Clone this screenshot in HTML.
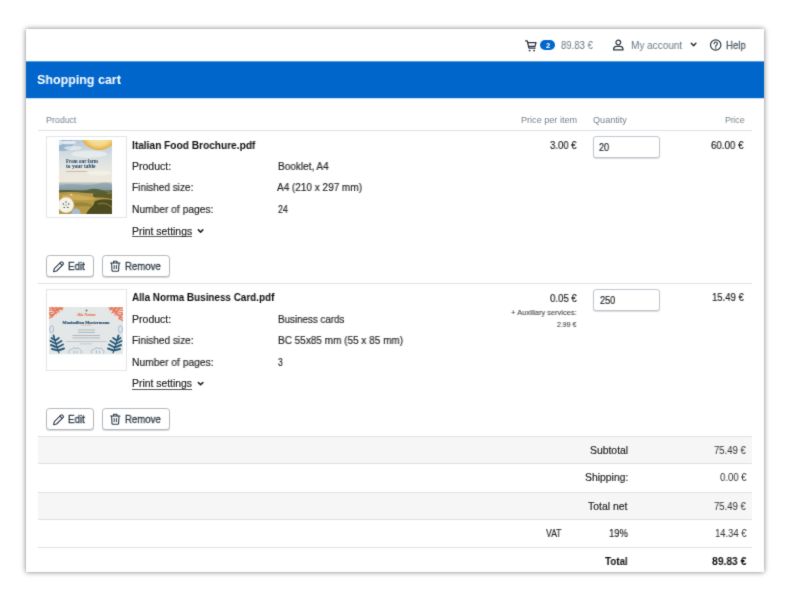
<!DOCTYPE html>
<html>
<head>
<meta charset="utf-8">
<title>Shopping cart</title>
<style>
*{box-sizing:border-box;margin:0;padding:0}
html,body{width:800px;height:600px;overflow:hidden;background:#fff}
body{font-family:"Liberation Sans",sans-serif;position:relative;filter:url(#soft)}
body>*{position:absolute}
.card{left:26px;top:28.6px;width:738px;height:543.4px;background:#fff;box-shadow:.3px .3px 4.5px rgba(0,0,0,.44),0 0 8px rgba(0,0,0,.12)}
.t{white-space:nowrap;transform-origin:0 50%;display:block;will-change:transform}
.bar{left:26px;top:61px;width:738px;height:37px;background:#0066cc;box-shadow:0 1px 0 rgba(0,102,204,.3)}
.ln{height:1px;background:#e0e1e3;left:38px;width:714px}
.grey{background:#f6f6f6;left:38px;width:714px}
.thumb{border:1px solid #e3e5e8;background:#fff;left:46px;width:81px;height:82px}
.btn{border:1px solid #b3b9be;border-radius:3.5px;height:22px;background:#fff;box-shadow:0 1px 1px rgba(60,70,80,.22)}
.inp{border:1px solid #c0c7ce;border-radius:3px;left:593px;width:67px;height:22px;background:#fff;box-shadow:0 1px 1px rgba(60,70,80,.2)}
.badge{left:540px;top:40px;width:15px;height:10px;border-radius:5px;background:#0066cc}
.ul{height:1px;background:#302e30;opacity:.8}
svg{overflow:visible}
</style>
</head>
<body>
<svg width="0" height="0" style="left:0;top:0"><defs><filter id="soft" x="0" y="0" width="100%" height="100%" color-interpolation-filters="sRGB"><feConvolveMatrix order="3" kernelMatrix="0.02 0.08 0.02 0.08 0.6 0.08 0.02 0.08 0.02" divisor="1" edgeMode="duplicate" preserveAlpha="false"/></filter></defs></svg>
<div class="card"></div>
<svg style="left:26px;top:61px" width="738" height="38" viewBox="0 0 738 38"><rect x="0" y="0.35" width="738" height="36.85" fill="#0066cc"/></svg>
<div class="badge"></div>

<!-- separators -->
<div class="ln" style="top:130px"></div>
<div class="ln" style="top:283px"></div>
<div class="grey" style="top:437px;height:26px"></div>
<div class="grey" style="top:493px;height:26px"></div>
<div class="ln" style="top:436px"></div>
<div class="ln" style="top:463px"></div>
<div class="ln" style="top:492px"></div>
<div class="ln" style="top:519px"></div>
<div class="ln" style="top:547px"></div>

<!-- thumbs -->
<div class="thumb" style="top:136px"></div>
<div class="thumb" style="top:289px"></div>

<!-- inputs & buttons -->
<div class="inp" style="top:136px"></div>
<div class="inp" style="top:289px"></div>
<div class="btn" style="left:46px;top:255px;width:48px"></div>
<div class="btn" style="left:102px;top:255px;width:68px"></div>
<div class="btn" style="left:46px;top:408px;width:48px"></div>
<div class="btn" style="left:102px;top:408px;width:68px"></div>

<!-- underlines -->
<div class="ul" style="left:132px;top:236px;width:60px"></div>
<div class="ul" style="left:132px;top:389px;width:60px"></div>

<!--ICONS-->
<!-- nav icons -->
<svg style="left:525px;top:39.5px" width="12" height="12" viewBox="0 0 12 12" fill="none" stroke="#2a333c" stroke-width="1.25" stroke-linecap="round" stroke-linejoin="round">
  <path d="M0.6 0.9H2.3L3.9 8.1H10.2"/>
  <path d="M2.8 2.6H11L10 6.3H3.6"/>
  <circle cx="4.6" cy="10.6" r="0.95" fill="#2f3943" stroke="none"/>
  <circle cx="9.1" cy="10.6" r="0.95" fill="#2f3943" stroke="none"/>
</svg>
<svg style="left:612px;top:39px" width="13" height="12" viewBox="0 0 13 12" fill="none" stroke="#2f3943" stroke-width="1.25" stroke-linejoin="round">
  <circle cx="6.3" cy="3.5" r="2.35"/>
  <path d="M1.6 10.9V10.2A3 3 0 0 1 4.6 7.4H8A3 3 0 0 1 11 10.2V10.9Z"/>
</svg>
<svg style="left:690px;top:42px" width="7" height="5" viewBox="0 0 7 5" fill="none" stroke="#27313b" stroke-width="1.5" stroke-linecap="round" stroke-linejoin="round">
  <path d="M1.3 1.3L3.6 3.7L5.9 1.3"/>
</svg>
<svg style="left:709px;top:39px" width="13" height="13" viewBox="0 0 13 13" fill="none" stroke="#2f3943" stroke-width="1.2" stroke-linecap="round">
  <circle cx="6.7" cy="6" r="5.2"/>
  <path d="M5.1 4.7A1.65 1.65 0 1 1 7.4 6.2C6.9 6.5 6.7 6.8 6.7 7.4" stroke-width="1.15"/>
  <circle cx="6.7" cy="9" r="0.7" fill="#2f3943" stroke="none"/>
</svg>
<!-- print settings chevrons -->
<svg style="left:197px;top:228.2px" width="7" height="5" viewBox="0 0 7 5" fill="none" stroke="#20262c" stroke-width="1.6" stroke-linecap="round" stroke-linejoin="round">
  <path d="M1.4 1.9L3.6 4.1L5.8 1.9"/>
</svg>
<svg style="left:197px;top:381.2px" width="7" height="5" viewBox="0 0 7 5" fill="none" stroke="#20262c" stroke-width="1.6" stroke-linecap="round" stroke-linejoin="round">
  <path d="M1.4 1.6L3.6 3.8L5.8 1.6"/>
</svg>
<!-- pencil + trash (row 1) -->
<svg style="left:53px;top:261px" width="11" height="11" viewBox="0 0 11 11" fill="none" stroke="#2d3b48" stroke-width="1.1" stroke-linejoin="round" stroke-linecap="round">
  <path d="M0.6 10.7L1.3 7.7L7.9 1.1Q8.6 0.5 9.3 1.1L10.2 2Q10.8 2.7 10.2 3.4L3.6 10Z"/>
  <path d="M6.9 2.2L9.1 4.4"/>
</svg>
<svg style="left:110px;top:260.3px" width="11" height="12" viewBox="0 0 11 12" fill="none" stroke="#2d3b48" stroke-width="1.1" stroke-linejoin="round" stroke-linecap="round">
  <path d="M0.6 3H10"/>
  <path d="M3.6 2.9V1.2H7V2.9"/>
  <path d="M1.6 3.2L2 10.4Q2.05 11.3 3 11.3H7.6Q8.55 11.3 8.6 10.4L9 3.2"/>
  <path d="M4.2 5.5V8.7M6.4 5.5V8.7" stroke-width="1"/>
</svg>
<!-- pencil + trash (row 2) -->
<svg style="left:53px;top:414px" width="11" height="11" viewBox="0 0 11 11" fill="none" stroke="#2d3b48" stroke-width="1.1" stroke-linejoin="round" stroke-linecap="round">
  <path d="M0.6 10.7L1.3 7.7L7.9 1.1Q8.6 0.5 9.3 1.1L10.2 2Q10.8 2.7 10.2 3.4L3.6 10Z"/>
  <path d="M6.9 2.2L9.1 4.4"/>
</svg>
<svg style="left:110px;top:413.3px" width="11" height="12" viewBox="0 0 11 12" fill="none" stroke="#2d3b48" stroke-width="1.1" stroke-linejoin="round" stroke-linecap="round">
  <path d="M0.6 3H10"/>
  <path d="M3.6 2.9V1.2H7V2.9"/>
  <path d="M1.6 3.2L2 10.4Q2.05 11.3 3 11.3H7.6Q8.55 11.3 8.6 10.4L9 3.2"/>
  <path d="M4.2 5.5V8.7M6.4 5.5V8.7" stroke-width="1"/>
</svg>
<!-- thumbnail 1: brochure cover -->
<svg style="left:59px;top:140px;will-change:transform" width="53" height="74" viewBox="0 0 53 74">
  <defs>
    <linearGradient id="sky" x1="0" y1="0" x2="0" y2="1">
      <stop offset="0" stop-color="#b4c8d7"/><stop offset=".2" stop-color="#d3dde2"/>
      <stop offset=".4" stop-color="#e8e8e1"/><stop offset=".565" stop-color="#ede8da"/>
      <stop offset=".58" stop-color="#bcc8cc"/><stop offset=".655" stop-color="#8095a0"/>
      <stop offset=".68" stop-color="#6a7a62"/><stop offset=".72" stop-color="#a89046"/>
      <stop offset="1" stop-color="#b0903f"/>
    </linearGradient>
    <radialGradient id="lem" cx=".5" cy=".5" r=".5">
      <stop offset="0" stop-color="#f8ecc0"/><stop offset=".7" stop-color="#f2d88c"/><stop offset=".93" stop-color="#e9b950"/><stop offset="1" stop-color="#e3a63a"/>
    </radialGradient>
    <clipPath id="c1"><rect width="53" height="74"/></clipPath>
  </defs>
  <g clip-path="url(#c1)">
    <rect width="53" height="74" fill="url(#sky)"/>
    <ellipse cx="4" cy="4" rx="10" ry="7" fill="#8eadc9" opacity=".8"/>
    <ellipse cx="9" cy="2.5" rx="8" ry="1.8" fill="#eef2f4" opacity=".85"/>
    <ellipse cx="14" cy="8" rx="9" ry="2" fill="#e9eef1" opacity=".7"/>
    <ellipse cx="30" cy="14" rx="18" ry="3.5" fill="#f1f2ef" opacity=".65"/>
    <ellipse cx="40" cy="33" rx="12" ry="2.5" fill="#f6f3e8" opacity=".7"/>
    <ellipse cx="40" cy="-6" rx="18" ry="16" fill="url(#lem)"/>
    <rect x="0" y="0" width="2.5" height="5" fill="#eef2f4" opacity=".75"/>
    <text x="7" y="23.2" font-family="Liberation Serif" font-weight="bold" font-size="5.1" fill="#21405e" textLength="32" lengthAdjust="spacingAndGlyphs">From our farm</text>
    <text x="7" y="28" font-family="Liberation Serif" font-weight="bold" font-size="5.1" fill="#21405e" textLength="29.5" lengthAdjust="spacingAndGlyphs">to your table</text>
    <rect x="7" y="31" width="21" height=".7" fill="#e09a84"/>
    <path d="M0 45.5Q10 43 20 44.5T40 43.5T53 44.5V50H0Z" fill="#8fa3ad" opacity=".75"/>
    <path d="M0 50.5Q8 49.5 16 50.5T30 49.5T44 50.5T53 49.5V53.5H0Z" fill="#56603a"/>
    <path d="M0 52.5Q14 51.5 26 53T53 52.5V74H0Z" fill="#b69947"/>
    <path d="M3 55.5Q14 53.5 26 56T38 58.5Q30 61 18 60T3 58Z" fill="#d0b059" opacity=".85"/>
    <path d="M34 53.5Q40 52 46 53T53 52.5V59Q46 57 40 57.5T34 55.5Z" fill="#5c5c2c"/>
    <path d="M36 61Q43 58 53 60V74H27Q29 70 32 67.5T36 61Z" fill="#4c4c22"/>
    <path d="M39 64Q45 62 50 65T53 71" stroke="#8d7a34" stroke-width="1.4" fill="none" opacity=".8"/>
    <path d="M15 63Q21 61.5 28 63T32 66.5Q24 65.5 16 66.5Z" fill="#93823a" opacity=".85"/>
    <rect x="11.5" y="54" width="1.8" height="1.2" fill="#f2efe6"/>
    <circle cx="7" cy="65" r="7.8" fill="#f4f2e9"/>
    <g fill="#3b3a2c"><circle cx="7" cy="62" r=".7"/><circle cx="4.3" cy="64" r=".7"/><circle cx="9.7" cy="64" r=".7"/><circle cx="5.2" cy="67.4" r=".7"/><circle cx="8.8" cy="67.4" r=".7"/><circle cx="7" cy="65" r=".6"/></g>
    <circle cx="17" cy="73" r="4.6" fill="#a9bccb"/>
  </g>
</svg>
<!-- thumbnail 2: business card -->
<svg style="left:49px;top:306.5px;will-change:transform" width="74" height="47.5" viewBox="0 0 74 47.5">
  <defs><clipPath id="c2"><rect width="74" height="47.5"/></clipPath></defs>
  <g clip-path="url(#c2)">
    <rect width="74" height="47.5" fill="#e4e7e7"/>
    <!-- coral corners -->
    <g fill="none" stroke="#e9704f" stroke-width="1.25" stroke-linecap="round">
      <path d="M0 1L14 1M0 3.5L11 2.5M1 6L9 3.5M1 8.5L8 5.5M0.5 11L5 8M3 0L7 7M7 0L10 5M11 0L13 3M0 5.5L3 10"/>
      <path d="M74 1L60 1M74 3.5L62 2.5M73 6L64 3.5M73 8.5L65 5.5M73.5 11L68 8M73.5 13.5L70 11M71 0L66 8M67 0L63 6M63 0L61 3M74 5.5L70 12"/>
    </g>
    <!-- logo -->
    <circle cx="37.5" cy="3.6" r="1" fill="#2f8f4e"/>
    <text x="27.5" y="9" font-family="Liberation Serif" font-weight="bold" font-style="italic" font-size="4.2" fill="#e0582f" textLength="19" lengthAdjust="spacingAndGlyphs">Alla Norma</text>
    <text x="13.5" y="16.6" font-family="Liberation Serif" font-weight="bold" font-size="4.8" fill="#234e6c" stroke="#234e6c" stroke-width=".15" textLength="47" lengthAdjust="spacingAndGlyphs">Maximilian Mustermann</text>
    <rect x="32" y="17.9" width="10.5" height=".6" fill="#e9a27a"/>
    <g fill="#66747f" opacity=".6">
      <rect x="29" y="22.6" width="17" height=".7"/><rect x="29" y="24.9" width="17" height=".7"/>
      <rect x="23.5" y="28.3" width="27.5" height=".7"/><rect x="23.5" y="30.6" width="27.5" height=".7"/>
      <rect x="17" y="34.1" width="40.5" height=".6" opacity=".8"/><rect x="31" y="36.6" width="12" height=".6" opacity=".8"/>
    </g>
    <!-- side ornaments -->
    <g fill="none" stroke="#9db6cd" stroke-width=".9">
      <rect x="0.8" y="19" width="3.6" height="6.5" rx="1.6"/><rect x="69.6" y="19" width="3.6" height="6.5" rx="1.6"/>
      <path d="M20 46.5Q19 42.5 22.5 42.5Q24 39.5 27 41.5Q30 40 31.5 43Q33.5 44 32 46.5M25 46.5V43.5M28 46.5V43.8"/>
      <path d="M42.5 46.5Q41.5 42.5 45 42.5Q46.5 39.5 49.5 41.5Q52.5 40 54 43Q56 44 54.5 46.5M47.5 46.5V43.5M50.5 46.5V43.8"/>
    </g>
    <!-- ferns -->
    <g fill="none" stroke="#27597a" stroke-width="1.9" stroke-linecap="round">
      <path d="M10 46L5 30" stroke-width="1.1"/>
      <path d="M9.3 43.5L3 42M9.3 43.5L15 41.5M8.4 40.5L2 38M8.4 40.5L14 37.5M7.4 37L1.5 34M7.4 37L12.5 34M6.4 33.5L2.5 31M6.4 33.5L9.8 31M5 30L4.5 28.5"/>
      <path d="M64 46L69 30" stroke-width="1.1"/>
      <path d="M64.7 43.5L71 42M64.7 43.5L59 41.5M65.6 40.5L72 38M65.6 40.5L60 37.5M66.6 37L72.5 34M66.6 37L61.5 34M67.6 33.5L71.5 31M67.6 33.5L64.2 31M69 30L69.5 28.5"/>
    </g>
  </g>
</svg>

<span class="t" style="left:561.00px;top:38.50px;font-size:10.4px;line-height:14px;color:#6a757f;transform:scaleX(0.9172);-webkit-text-stroke:0;">89.83 €</span>
<span class="t" style="left:631.20px;top:38.50px;font-size:10.4px;line-height:14px;color:#6a757f;transform:scaleX(0.9635);-webkit-text-stroke:0;">My account</span>
<span class="t" style="left:726.20px;top:38.90px;font-size:10.4px;line-height:14px;color:#55606b;transform:scaleX(0.9263);-webkit-text-stroke:.3px #55606b;">Help</span>
<span class="t" style="left:545.80px;top:41.40px;font-size:7.4px;line-height:10px;color:#fff;transform:scaleX(1.0500);font-weight:bold;">2</span>
<span class="t" style="left:37.40px;top:71.40px;font-size:13.1px;line-height:17px;color:#fff;transform:scaleX(0.9531);font-weight:bold;">Shopping cart</span>
<span class="t" style="left:45.75px;top:114.10px;font-size:9.1px;line-height:12px;color:#77828b;transform:scaleX(0.9666);">Product</span>
<span class="t" style="left:520.75px;top:114.10px;font-size:9.1px;line-height:12px;color:#77828b;transform:scaleX(0.9997);">Price per item</span>
<span class="t" style="left:593.00px;top:114.10px;font-size:9.1px;line-height:12px;color:#77828b;transform:scaleX(0.9980);">Quantity</span>
<span class="t" style="left:724.60px;top:114.10px;font-size:9.1px;line-height:12px;color:#77828b;transform:scaleX(0.9390);">Price</span>
<span class="t" style="left:132.00px;top:137.75px;font-size:10.6px;line-height:14px;color:#0e0e10;transform:scaleX(0.9566);font-weight:bold;">Italian Food Brochure.pdf</span>
<span class="t" style="left:132.30px;top:159.50px;font-size:10.4px;line-height:14px;color:#272527;transform:scaleX(1.0103);-webkit-text-stroke:.18px #272527;">Product:</span>
<span class="t" style="left:132.30px;top:180.75px;font-size:10.4px;line-height:14px;color:#272527;transform:scaleX(0.9651);-webkit-text-stroke:.18px #272527;">Finished size:</span>
<span class="t" style="left:132.30px;top:202.80px;font-size:10.4px;line-height:14px;color:#272527;transform:scaleX(0.9846);-webkit-text-stroke:.18px #272527;">Number of pages:</span>
<span class="t" style="left:132.30px;top:224.50px;font-size:10.4px;line-height:14px;color:#272527;transform:scaleX(1.0014);-webkit-text-stroke:.18px #272527;">Print settings</span>
<span class="t" style="left:277.75px;top:159.50px;font-size:10.4px;line-height:14px;color:#272527;transform:scaleX(0.9651);-webkit-text-stroke:.18px #272527;">Booklet, A4</span>
<span class="t" style="left:277.25px;top:180.75px;font-size:10.4px;line-height:14px;color:#272527;transform:scaleX(0.9614);-webkit-text-stroke:.18px #272527;">A4 (210 x 297 mm)</span>
<span class="t" style="left:277.75px;top:202.50px;font-size:10.4px;line-height:14px;color:#272527;transform:scaleX(0.8490);-webkit-text-stroke:.18px #272527;">24</span>
<span class="t" style="left:549.50px;top:139.25px;font-size:10.4px;line-height:14px;color:#232223;transform:scaleX(0.9189);-webkit-text-stroke:.18px #232223;">3.00 €</span>
<span class="t" style="left:599.25px;top:140.50px;font-size:10.4px;line-height:14px;color:#232223;transform:scaleX(0.8702);-webkit-text-stroke:.18px #232223;">20</span>
<span class="t" style="left:711.40px;top:139.20px;font-size:10.4px;line-height:14px;color:#232223;transform:scaleX(0.9344);-webkit-text-stroke:.18px #232223;">60.00 €</span>
<span class="t" style="left:68.00px;top:259.50px;font-size:10.4px;line-height:14px;color:#2d3b48;transform:scaleX(0.9435);-webkit-text-stroke:.32px #2d3b48;">Edit</span>
<span class="t" style="left:125.20px;top:259.50px;font-size:10.4px;line-height:14px;color:#2d3b48;transform:scaleX(0.9226);-webkit-text-stroke:.32px #2d3b48;">Remove</span>
<span class="t" style="left:132.00px;top:290.25px;font-size:10.6px;line-height:14px;color:#0e0e10;transform:scaleX(0.9337);font-weight:bold;">Alla Norma Business Card.pdf</span>
<span class="t" style="left:132.30px;top:312.50px;font-size:10.4px;line-height:14px;color:#272527;transform:scaleX(1.0130);-webkit-text-stroke:.18px #272527;">Product:</span>
<span class="t" style="left:132.30px;top:334.00px;font-size:10.4px;line-height:14px;color:#272527;transform:scaleX(0.9690);-webkit-text-stroke:.18px #272527;">Finished size:</span>
<span class="t" style="left:132.30px;top:355.50px;font-size:10.4px;line-height:14px;color:#272527;transform:scaleX(0.9877);-webkit-text-stroke:.18px #272527;">Number of pages:</span>
<span class="t" style="left:132.30px;top:377.20px;font-size:10.4px;line-height:14px;color:#272527;transform:scaleX(0.9989);-webkit-text-stroke:.18px #272527;">Print settings</span>
<span class="t" style="left:278.00px;top:312.50px;font-size:10.4px;line-height:14px;color:#272527;transform:scaleX(0.9422);-webkit-text-stroke:.18px #272527;">Business cards</span>
<span class="t" style="left:278.00px;top:334.00px;font-size:10.4px;line-height:14px;color:#272527;transform:scaleX(0.9625);-webkit-text-stroke:.18px #272527;">BC 55x85 mm (55 x 85 mm)</span>
<span class="t" style="left:278.00px;top:355.50px;font-size:10.4px;line-height:14px;color:#272527;transform:scaleX(0.8333);-webkit-text-stroke:.18px #272527;">3</span>
<span class="t" style="left:549.50px;top:292.10px;font-size:10.4px;line-height:14px;color:#232223;transform:scaleX(0.9275);-webkit-text-stroke:.18px #232223;">0.05 €</span>
<span class="t" style="left:510.50px;top:307.50px;font-size:7.6px;line-height:10px;color:#444349;transform:scaleX(0.9822);-webkit-text-stroke:.1px #444349;">+ Auxiliary services:</span>
<span class="t" style="left:556.50px;top:319.50px;font-size:7.6px;line-height:10px;color:#444349;transform:scaleX(0.9137);-webkit-text-stroke:.1px #444349;">2.99 €</span>
<span class="t" style="left:599.50px;top:293.50px;font-size:10.4px;line-height:14px;color:#232223;transform:scaleX(0.8828);-webkit-text-stroke:.18px #232223;">250</span>
<span class="t" style="left:711.90px;top:290.80px;font-size:10.4px;line-height:14px;color:#232223;transform:scaleX(0.9143);-webkit-text-stroke:.18px #232223;">15.49 €</span>
<span class="t" style="left:68.00px;top:412.50px;font-size:10.4px;line-height:14px;color:#2d3b48;transform:scaleX(0.9435);-webkit-text-stroke:.32px #2d3b48;">Edit</span>
<span class="t" style="left:125.20px;top:412.50px;font-size:10.4px;line-height:14px;color:#2d3b48;transform:scaleX(0.9226);-webkit-text-stroke:.32px #2d3b48;">Remove</span>
<span class="t" style="left:589.50px;top:443.50px;font-size:10.4px;line-height:14px;color:#272527;transform:scaleX(0.9982);-webkit-text-stroke:.18px #272527;">Subtotal</span>
<span class="t" style="left:714.40px;top:443.50px;font-size:10.4px;line-height:14px;color:#353436;transform:scaleX(0.9143);-webkit-text-stroke:.05px #353436;">75.49 €</span>
<span class="t" style="left:585.00px;top:470.90px;font-size:10.4px;line-height:14px;color:#272527;transform:scaleX(0.9955);-webkit-text-stroke:.18px #272527;">Shipping:</span>
<span class="t" style="left:719.60px;top:470.90px;font-size:10.4px;line-height:14px;color:#353436;transform:scaleX(0.9172);-webkit-text-stroke:.05px #353436;">0.00 €</span>
<span class="t" style="left:587.75px;top:500.00px;font-size:10.4px;line-height:14px;color:#272527;transform:scaleX(1.0028);-webkit-text-stroke:.18px #272527;">Total net</span>
<span class="t" style="left:714.40px;top:500.00px;font-size:10.4px;line-height:14px;color:#353436;transform:scaleX(0.9143);-webkit-text-stroke:.05px #353436;">75.49 €</span>
<span class="t" style="left:545.75px;top:526.50px;font-size:10.4px;line-height:14px;color:#272527;transform:scaleX(0.8283);-webkit-text-stroke:.18px #272527;">VAT</span>
<span class="t" style="left:608.50px;top:526.50px;font-size:10.4px;line-height:14px;color:#272527;transform:scaleX(0.9121);-webkit-text-stroke:.18px #272527;">19%</span>
<span class="t" style="left:714.70px;top:526.50px;font-size:10.4px;line-height:14px;color:#353436;transform:scaleX(0.9057);-webkit-text-stroke:.05px #353436;">14.34 €</span>
<span class="t" style="left:604.50px;top:553.75px;font-size:10.6px;line-height:14px;color:#0e0e10;transform:scaleX(0.9257);font-weight:bold;">Total</span>
<span class="t" style="left:711.80px;top:553.75px;font-size:10.6px;line-height:14px;color:#0e0e10;transform:scaleX(0.9731);font-weight:bold;">89.83 €</span>

</body>
</html>
